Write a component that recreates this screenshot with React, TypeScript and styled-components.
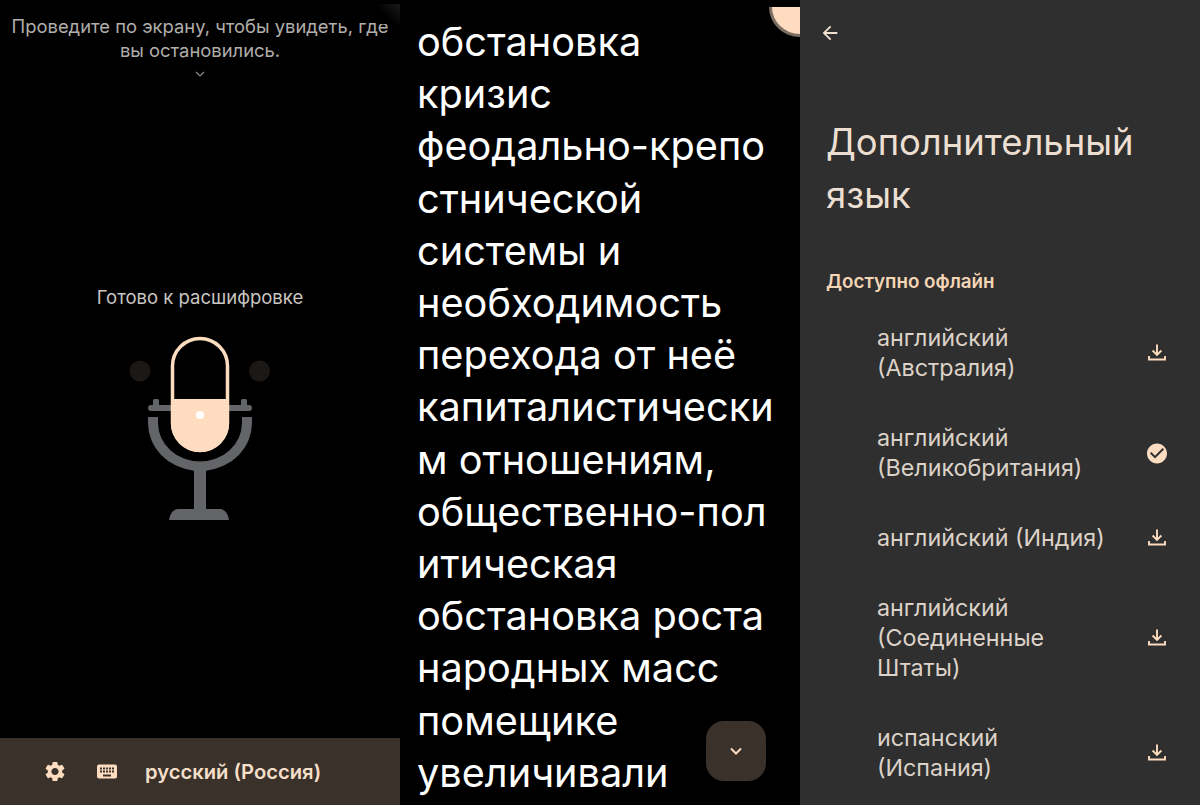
import React from "react";
import styled, { createGlobalStyle } from "styled-components";
import { MdArrowBack, MdCheckCircle, MdKeyboard, MdSettings } from "react-icons/md";

const peach = "#fddcc0";
const cream = "#f0e0d0";
const stack = `Inter, "Noto Sans", "Liberation Sans", sans-serif`;

const GlobalStyle = createGlobalStyle`
  html, body {
    margin: 0;
    padding: 0;
    background: #000;
    overflow: hidden;
  }
  * { box-sizing: border-box; }
`;

const Page = styled.div`
  width: 1200px;
  height: 805px;
  display: grid;
  grid-template-columns: 400px 400px 400px;
  font-family: ${stack};
`;

const ListenPanel = styled.section`
  position: relative;
  display: flex;
  flex-direction: column;
  height: 805px;
  background: #000;
`;

const CornerShade = styled.div`
  position: absolute;
  top: 4px;
  right: 0;
  width: 20px;
  height: 20px;
  background: linear-gradient(45deg, #000 35%, #1a1a1a 100%);
`;

const Hint = styled.p`
  margin: 0;
  padding-top: 14px;
  font-size: 18.4px;
  line-height: 24px;
  text-align: center;
  color: #b0aeab;
`;

const HintChevron = styled.svg`
  display: block;
  margin: 8px auto 0;
  width: 12px;
  height: 8px;
  fill: none;
  stroke: #8b8986;
  stroke-width: 1.2;
`;

const Stage = styled.div`
  flex: 1;
  display: flex;
  flex-direction: column;
  align-items: center;
  padding-top: 207px;
`;

const Ready = styled.div`
  font-size: 18.5px;
  line-height: 24px;
  color: #c9c6c2;
`;

const Mic = styled.svg`
  display: block;
  margin-top: 21px;
  width: 160px;
  height: 200px;
`;

const Footer = styled.footer`
  height: 67px;
  flex: none;
  display: flex;
  align-items: center;
  padding: 0 0 0 43px;
  background: #3a312a;
  color: ${peach};
`;

const FooterIcon = styled.span`
  display: flex;
  width: 24px;
  margin-right: 28px;
  font-size: 25px;
  &:nth-child(2) { margin-right: 26px; }
`;

const FooterLabel = styled.span`
  font-size: 20.2px;
  font-weight: 600;
  color: #f5dfc8;
`;

const TranscriptPanel = styled.section`
  position: relative;
  height: 805px;
  background: #000;
  overflow: hidden;
  padding: 16px 0 0 17px;
`;

const TranscriptText = styled.div`
  font-size: 39.7px;
  line-height: 52.2px;
  color: #fff;
  white-space: nowrap;
`;

const Line = styled.div``;

const Avatar = styled.div`
  position: absolute;
  top: 7px;
  right: 0;
  width: 31px;
  height: 30px;
  background: ${peach};
  border-left: 3px solid #7b6e62;
  border-bottom: 3px solid #7b6e62;
  border-bottom-left-radius: 100%;
`;

const ScrollButton = styled.button`
  position: absolute;
  left: 306px;
  top: 721px;
  width: 60px;
  height: 60px;
  padding: 0;
  border: 0;
  border-radius: 18px;
  background: #3a312b;
  display: flex;
  align-items: center;
  justify-content: center;
`;

const ScrollChevron = styled.svg`
  width: 14px;
  height: 10px;
  fill: none;
  stroke: ${peach};
  stroke-width: 2;
`;

const LanguagePanel = styled.section`
  height: 805px;
  background: #2f2f2f;
  overflow: hidden;
  padding: 0 0 0 26px;
`;

const BackButton = styled.div`
  display: flex;
  height: 24px;
  margin: 22px 0 0 -7px;
  color: ${cream};
  font-size: 22px;
`;

const Heading = styled.h1`
  margin: 70px 0 0;
  font-size: 36.4px;
  line-height: 53px;
  font-weight: 400;
  color: #ecdfd2;
`;

const SectionLabel = styled.h2`
  margin: 48px 0 0;
  font-size: 18.8px;
  line-height: 24px;
  font-weight: 600;
  color: #f4d5b6;
`;

const LanguageList = styled.ul`
  list-style: none;
  margin: 29px 0 0;
  padding: 0 31px 0 51px;
  display: flex;
  flex-direction: column;
  gap: 40px;
`;

const LanguageRow = styled.li`
  display: flex;
  align-items: center;
  justify-content: space-between;
  font-size: 23.3px;
  line-height: 30px;
  color: #dcd2c8;
`;

const RowIcon = styled.span`
  display: flex;
  flex: none;
  width: 24px;
  justify-content: center;
  color: ${peach};
  font-size: 25px;
`;

const DownloadIcon = () => (
  <svg width="20" height="20" viewBox="0 0 20 20" fill="none" stroke={peach} strokeWidth="1.9">
    <path d="M10 1.500v10M5.600 7.500 10 11.900 14.400 7.500M2 13v3.500h16V13" />
  </svg>
);

const languages = [
  { lines: ["английский", "(Австралия)"] },
  { lines: ["английский", "(Великобритания)"], installed: true },
  { lines: ["английский (Индия)"] },
  { lines: ["английский", "(Соединенные", "Штаты)"] },
  { lines: ["испанский", "(Испания)"] },
];

const transcript = [
  "обстановка",
  "кризис",
  "феодально-крепо",
  "стнической",
  "системы и",
  "необходимость",
  "перехода от неё",
  "капиталистически",
  "м отношениям,",
  "общественно-пол",
  "итическая",
  "обстановка роста",
  "народных масс",
  "помещике",
  "увеличивали",
];

export default function App() {
  return (
    <Page>
      <GlobalStyle />
      <ListenPanel>
        <CornerShade />
        <Hint>
          Проведите по экрану, чтобы увидеть, где
          <br />
          вы остановились.
        </Hint>
        <HintChevron viewBox="0 0 12 8">
          <path d="M2 2l4 4 4-4" />
        </HintChevron>
        <Stage>
          <Ready>Готово к расшифровке</Ready>
          <Mic viewBox="120 330 160 200">
            <circle cx="140" cy="371" r="10.5" fill="#1c1815" />
            <circle cx="259.5" cy="371" r="10.5" fill="#1c1815" />
            <g fill="#636568">
              <rect x="148" y="405" width="104" height="6" rx="3" />
              <rect x="153" y="399" width="6" height="9" rx="1.5" />
              <rect x="241" y="399" width="6" height="9" rx="1.5" />
              <path d="M148 417H158V423A42 38.500 0 0 0 242 423V417H252V423A52 48 0 0 1 206 470.700V509H220C225 509 228 514 229 520H169C170 514 173 509 178 509H194V470.700A52 48 0 0 1 148 423Z" />
            </g>
            <rect x="172.500" y="338.500" width="55" height="112" rx="27.500" fill="#000" stroke={peach} strokeWidth="3.500" />
            <path d="M171 399h58v24a29 29 0 0 1-58 0z" fill={peach} />
            <circle cx="200" cy="415" r="4" fill="#fff" />
          </Mic>
        </Stage>
        <Footer>
          <FooterIcon>
            <MdSettings />
          </FooterIcon>
          <FooterIcon>
            <MdKeyboard />
          </FooterIcon>
          <FooterLabel>русский (Россия)</FooterLabel>
        </Footer>
      </ListenPanel>

      <TranscriptPanel>
        <TranscriptText>
          {transcript.map((line) => (
            <Line key={line}>{line}</Line>
          ))}
        </TranscriptText>
        <Avatar />
        <ScrollButton aria-label="Вниз">
          <ScrollChevron viewBox="0 0 14 10">
            <path d="M2 2.500l5 5 5-5" />
          </ScrollChevron>
        </ScrollButton>
      </TranscriptPanel>

      <LanguagePanel>
        <BackButton>
          <MdArrowBack />
        </BackButton>
        <Heading>
          Дополнительный
          <br />
          язык
        </Heading>
        <SectionLabel>Доступно офлайн</SectionLabel>
        <LanguageList>
          {languages.map((language) => (
            <LanguageRow key={language.lines.join(" ")}>
              <div>
                {language.lines.map((line) => (
                  <div key={line}>{line}</div>
                ))}
              </div>
              <RowIcon>{language.installed ? <MdCheckCircle /> : <DownloadIcon />}</RowIcon>
            </LanguageRow>
          ))}
        </LanguageList>
      </LanguagePanel>
    </Page>
  );
}
